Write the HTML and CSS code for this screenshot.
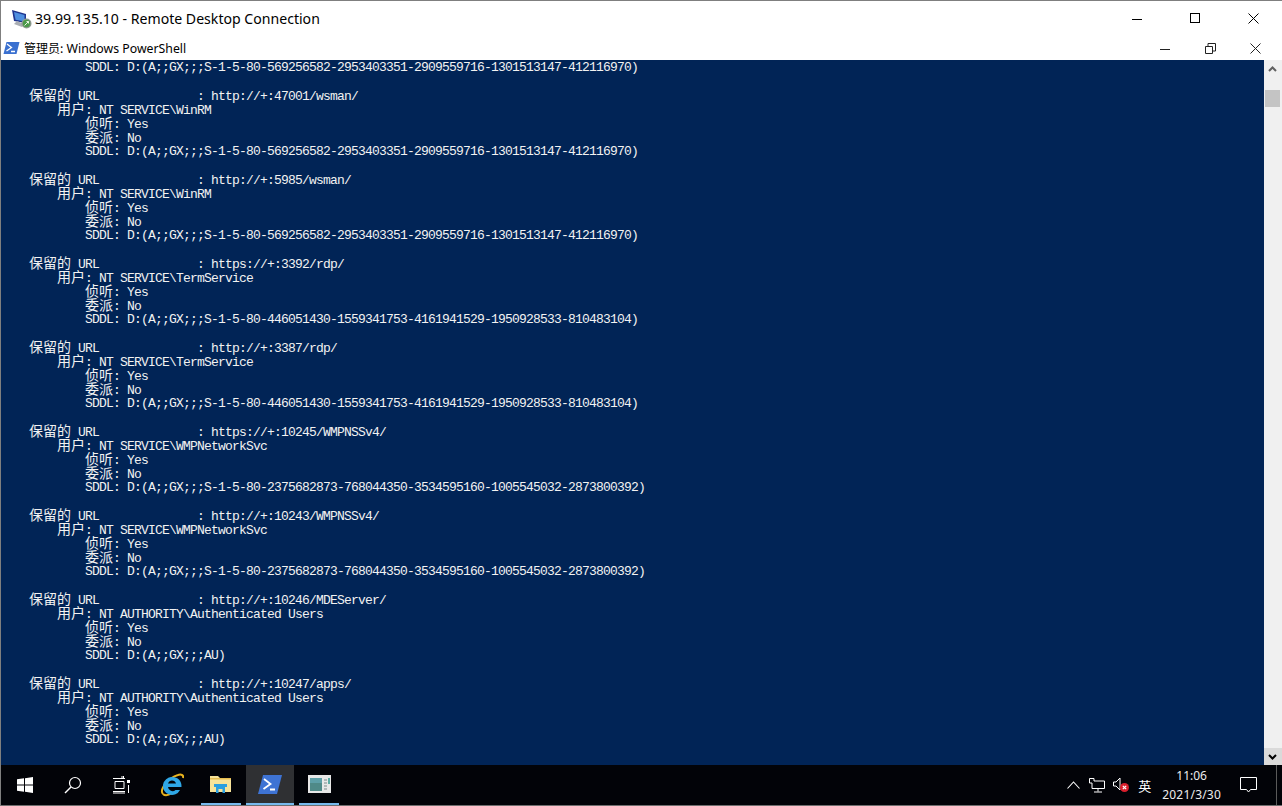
FILE: index.html
```html
<!DOCTYPE html>
<html lang="zh">
<head>
<meta charset="utf-8">
<title>Remote Desktop Connection</title>
<link rel="stylesheet" href="styles.css">
</head>
<body>
<div class="rdp">
  <header class="rdp-bar">
    <svg class="rdp-icon" width="22" height="22" viewBox="0 0 22 22">
      <path d="M1 3 L15 7 V16 L3 14 Z" fill="#20358f"/>
      <path d="M3 5 L13.500 8 V14.500 L4.500 12.800 Z" fill="#4f8fe0"/>
      <path d="M6 14 L13 17 L11 20 L3 17 Z" fill="#a9adb3"/>
      <circle cx="15.500" cy="16.500" r="5" fill="#8f9a92"/>
      <circle cx="15.500" cy="16.500" r="3.700" fill="#4c9a4a"/>
      <path d="M13.500 18.500 L17.500 14.500 M15.500 14.500 H17.500 V16.500" stroke="#e8f5e4" stroke-width="1" fill="none"/>
    </svg>
    <span class="rdp-title">39.99.135.10 - Remote Desktop Connection</span>
    <div class="caption caption-outer">
      <svg width="11" height="11" viewBox="0 0 11 11"><path d="M0 6.500 H10" stroke="#000"/></svg>
      <svg width="11" height="11" viewBox="0 0 11 11"><rect x="0.500" y="0.500" width="9" height="9" fill="none" stroke="#000"/></svg>
      <svg width="11" height="11" viewBox="0 0 11 11"><path d="M0.500 0.500 L10.500 10.500 M10.500 0.500 L0.500 10.500" stroke="#000"/></svg>
    </div>
  </header>
  <header class="ps-bar">
    <svg class="ps-icon" width="17" height="14" viewBox="0 0 17 14">
      <path d="M3.500 1 H16.500 L13.500 13 H0.500 Z" fill="#3a70d0"/>
      <path d="M4 3 L8.500 6.500 L3.500 10 M8 10.500 H12" stroke="#fff" stroke-width="1.300" fill="none"/>
    </svg>
    <span class="ps-title"><span class="ps-cjk">管理员:</span> Windows PowerShell</span>
    <div class="caption caption-inner">
      <svg width="11" height="11" viewBox="0 0 11 11"><path d="M0 6.500 H10" stroke="#222"/></svg>
      <svg width="11" height="11" viewBox="0 0 11 11"><path d="M0.500 3.500 H7.500 V10.500 H0.500 Z M3 3 V0.500 H10.500 V8 H8" fill="none" stroke="#222"/></svg>
      <svg width="11" height="11" viewBox="0 0 11 11"><path d="M0.500 0.500 L10.500 10.500 M10.500 0.500 L0.500 10.500" stroke="#222"/></svg>
    </div>
  </header>
  <main class="ps-body">
    <pre class="console"><div>            SDDL: D:(A;;GX;;;S-1-5-80-569256582-2953403351-2909559716-1301513147-412116970)</div><div> </div><div>    <b>保留的</b> URL              : http://+:47001/wsman/</div><div>        <b>用户</b>: NT SERVICE\WinRM</div><div>            <b>侦听</b>: Yes</div><div>            <b>委派</b>: No</div><div>            SDDL: D:(A;;GX;;;S-1-5-80-569256582-2953403351-2909559716-1301513147-412116970)</div><div> </div><div>    <b>保留的</b> URL              : http://+:5985/wsman/</div><div>        <b>用户</b>: NT SERVICE\WinRM</div><div>            <b>侦听</b>: Yes</div><div>            <b>委派</b>: No</div><div>            SDDL: D:(A;;GX;;;S-1-5-80-569256582-2953403351-2909559716-1301513147-412116970)</div><div> </div><div>    <b>保留的</b> URL              : https://+:3392/rdp/</div><div>        <b>用户</b>: NT SERVICE\TermService</div><div>            <b>侦听</b>: Yes</div><div>            <b>委派</b>: No</div><div>            SDDL: D:(A;;GX;;;S-1-5-80-446051430-1559341753-4161941529-1950928533-810483104)</div><div> </div><div>    <b>保留的</b> URL              : http://+:3387/rdp/</div><div>        <b>用户</b>: NT SERVICE\TermService</div><div>            <b>侦听</b>: Yes</div><div>            <b>委派</b>: No</div><div>            SDDL: D:(A;;GX;;;S-1-5-80-446051430-1559341753-4161941529-1950928533-810483104)</div><div> </div><div>    <b>保留的</b> URL              : https://+:10245/WMPNSSv4/</div><div>        <b>用户</b>: NT SERVICE\WMPNetworkSvc</div><div>            <b>侦听</b>: Yes</div><div>            <b>委派</b>: No</div><div>            SDDL: D:(A;;GX;;;S-1-5-80-2375682873-768044350-3534595160-1005545032-2873800392)</div><div> </div><div>    <b>保留的</b> URL              : http://+:10243/WMPNSSv4/</div><div>        <b>用户</b>: NT SERVICE\WMPNetworkSvc</div><div>            <b>侦听</b>: Yes</div><div>            <b>委派</b>: No</div><div>            SDDL: D:(A;;GX;;;S-1-5-80-2375682873-768044350-3534595160-1005545032-2873800392)</div><div> </div><div>    <b>保留的</b> URL              : http://+:10246/MDEServer/</div><div>        <b>用户</b>: NT AUTHORITY\Authenticated Users</div><div>            <b>侦听</b>: Yes</div><div>            <b>委派</b>: No</div><div>            SDDL: D:(A;;GX;;;AU)</div><div> </div><div>    <b>保留的</b> URL              : http://+:10247/apps/</div><div>        <b>用户</b>: NT AUTHORITY\Authenticated Users</div><div>            <b>侦听</b>: Yes</div><div>            <b>委派</b>: No</div><div>            SDDL: D:(A;;GX;;;AU)</div></pre>
    <aside class="scrollbar">
      <svg class="arrow" width="18" height="17" viewBox="0 0 18 17"><path d="M5 11 L8.500 7.500 L12 11" fill="none" stroke="#606060" stroke-width="2"/></svg>
      <div class="track"><div class="thumb"></div></div>
      <svg class="arrow arrow-down" width="18" height="17" viewBox="0 0 18 17"><path d="M5 7 L8.500 10.500 L12 7" fill="none" stroke="#000" stroke-width="2"/></svg>
    </aside>
  </main>
  <footer class="taskbar">
    <div class="tb-btn tb-start">
      <svg width="16" height="16" viewBox="0 0 16 16"><path d="M0 2.300 L7 1.300 V7.500 H0 Z M8 1.200 L16 0 V7.500 H8 Z M0 8.500 H7 V14.700 L0 13.700 Z M8 8.500 H16 V16 L8 14.800 Z" fill="#fff"/></svg>
    </div>
    <div class="tb-btn tb-search">
      <svg width="18" height="18" viewBox="0 0 18 18"><circle cx="11" cy="7" r="5.500" fill="none" stroke="#fff" stroke-width="1.200"/><path d="M7 11 L1 17" stroke="#fff" stroke-width="1.400"/></svg>
    </div>
    <div class="tb-btn tb-view">
      <svg width="17" height="18" viewBox="0 0 17 18"><path d="M0 2.500 H12 M0 15.500 H12 M0 17 H12 M2 5.500 H11 V12.500 H2 Z M9 0 V2 M10.500 0 V2" fill="none" stroke="#fff"/><rect x="14" y="4" width="3" height="3" fill="#fff"/><path d="M15.500 9 V17" stroke="#fff"/></svg>
    </div>
    <div class="tb-btn tb-ie">
      <svg width="24" height="24" viewBox="0 0 24 24">
        <path d="M3 21 C-1 17 8 5 18 2 C21 1 24 2 23 5" fill="none" stroke="#e8b21e" stroke-width="2"/>
        <path d="M3 21 C5 23 9 22 12 20" fill="none" stroke="#e8b21e" stroke-width="2"/>
        <path d="M12 4 A9 9 0 1 0 20 17 H15.500 A4.500 4.500 0 0 1 8 14 H21.500 C22 8 18 4 12 4 Z M8 10.500 A4.200 4.200 0 0 1 16 10.500 Z" fill="#2fa7e6" fill-rule="evenodd"/>
      </svg>
    </div>
    <div class="tb-btn tb-app tb-files">
      <svg width="22" height="18" viewBox="0 0 22 18">
        <path d="M0 1 H8 L10 3 H21 V17 H0 Z" fill="#f7e39a"/>
        <path d="M0 3 H21 V4.500 H0 Z" fill="#e6bd50"/>
        <path d="M6 18 V11 H15 V18 H12.500 V14 H8.500 V18 Z M4 9 H17 V12 H4 Z" fill="#2b9fe0"/>
      </svg>
    </div>
    <div class="tb-btn tb-app tb-active">
      <svg width="24" height="19" viewBox="0 0 24 19">
        <path d="M5 0 H24 L19 19 H0 Z" fill="#3e73d4"/>
        <path d="M6 4 L12.500 9 L5.500 14 M12 14.500 H17" stroke="#fff" stroke-width="1.800" fill="none"/>
      </svg>
    </div>
    <div class="tb-btn tb-app tb-rdp">
      <svg width="23" height="18" viewBox="0 0 23 18">
        <rect x="0" y="0" width="23" height="18" fill="#e8e8e8"/>
        <rect x="2" y="3" width="12" height="13" fill="#4f8a88"/>
        <rect x="2" y="3" width="12" height="5" fill="#5ea0a8"/>
        <path d="M16 5 H19 M16 8 H19 M16 11 H19 M16 14 H19" stroke="#7a8a8a"/>
        <path d="M21 3 V9" stroke="#2f9a90" stroke-width="1.500"/>
      </svg>
    </div>
    <div class="tray">
      <svg class="tray-chev" width="13" height="8" viewBox="0 0 13 8"><path d="M0.500 7.500 L6.500 1 L12.500 7.500" fill="none" stroke="#fff" stroke-width="1.100"/></svg>
      <svg class="tray-net" width="16" height="15" viewBox="0 0 16 15"><path d="M0.500 0.500 H5 V3 H15.500 V10.500 H3 V5 H0.500 Z M9 10.500 V13.500 M5 14 H13" fill="none" stroke="#fff"/></svg>
      <svg class="tray-vol" width="17" height="16" viewBox="0 0 17 16">
        <path d="M0.500 5 H3 L7 1 V13 L3 9 H0.500 Z" fill="none" stroke="#fff"/>
        <circle cx="11.500" cy="10.500" r="4.500" fill="#d81e2c"/>
        <path d="M9.800 8.800 L13.200 12.200 M13.200 8.800 L9.800 12.200" stroke="#fff" stroke-width="1.200"/>
      </svg>
      <span class="tray-ime">英</span>
      <div class="clock"><span>11:06</span><span class="clock-date">2021/3/30</span></div>
      <svg class="tray-note" width="17" height="16" viewBox="0 0 17 16"><path d="M0.500 0.500 H16.500 V12.500 H10.500 L8.500 15 L6.500 12.500 H0.500 Z" fill="none" stroke="#fff"/></svg>
    </div>
  </footer>
</div>
</body>
</html>
```

FILE: styles.css
```css
* { box-sizing: border-box; }
html, body { margin: 0; padding: 0; height: 100%; overflow: hidden; }
body { background: #fff; font-family: "Open Sans", "Noto Sans CJK SC", sans-serif; }

.rdp {
  width: 1282px;
  height: 806px;
  display: flex;
  flex-direction: column;
  border-top: 1px solid #7f7f7f;
  border-left: 1px solid #7f7f7f;
  border-bottom: 1px solid #6e6e6e;
}

.rdp-bar {
  height: 32px;
  flex: none;
  display: flex;
  align-items: center;
  background: #fff;
  padding-left: 10px;
}
.rdp-icon { flex: none; margin-top: 1px; }
.rdp-title { margin-left: 2px; margin-top: 2px; font-family: "Noto Sans", sans-serif; font-size: 14.1px; color: #000; white-space: nowrap; }

.caption { margin-left: auto; display: flex; align-items: center; }
.caption-outer { gap: 47px; padding-right: 23px; margin-top: 2px; }
.caption-inner { gap: 34px; padding-right: 21px; }

.ps-bar {
  height: 27px;
  flex: none;
  display: flex;
  align-items: center;
  background: #fff;
  padding-left: 2px;
  padding-top: 3px;
}
.ps-icon { flex: none; }
.ps-title { margin-left: 4px; font-family: "Noto Sans", "Noto Sans CJK SC", sans-serif; font-size: 12.3px; color: #000; white-space: nowrap; }
.ps-cjk { font-family: "Noto Sans CJK SC", sans-serif; font-size: 12px; }

.ps-body { flex: 1; min-height: 0; display: flex; background: #012456; }
.console {
  flex: 1;
  margin: 0;
  padding-top: 1px;
  overflow: hidden;
  color: #f2f2f2;
  font-family: "Liberation Mono", "Noto Sans CJK SC", monospace;
  font-size: 13px;
  letter-spacing: -0.801px;
  line-height: 14px;
  white-space: pre;
}
.console div { height: 14px; }
.console div:has(b) { padding-top: 1px; }
.console b {
  font-family: "Noto Sans CJK SC", sans-serif;
  font-weight: 400;
  font-size: 14px;
  letter-spacing: 0;
  line-height: 0;
}

.scrollbar { flex: none; width: 18px; background: #f0f0f0; display: flex; flex-direction: column; }
.arrow { flex: none; display: block; }
.arrow-down { background: #dadada; }
.track { flex: 1; padding: 13px 1px 0; }
.thumb { height: 17px; width: 15px; background: #c4c4c4; }

.taskbar {
  height: 40px;
  flex: none;
  display: flex;
  background: #020308;
  color: #fff;
}
.tb-btn { flex: none; width: 48px; display: flex; align-items: center; justify-content: center; }
.tb-ie { width: 54px; }
.tb-app { border-bottom: 2px solid #76b9ed; }
.tb-files { width: 40px; margin: 0 5px 0 2px; }
.tb-active { width: 48px; background: #2f3033; }
.tb-rdp { width: 40px; margin-left: 5px; }

.tray { margin-left: auto; margin-right: 5px; display: flex; align-items: center; height: 100%; padding-right: 19px; border-right: 1px solid #5a5a5a; }
.tray-chev { margin-right: 9px; }
.tray-net { margin-right: 8px; }
.tray-vol { margin-right: 8px; }
.tray-ime { font-family: "Noto Sans CJK SC", sans-serif; font-size: 13px; margin-right: 11px; }
.clock { display: flex; flex-direction: column; align-items: center; font-family: "Noto Sans", sans-serif; font-size: 12px; line-height: 19px; color: #ececec; margin-right: 19px; }
.clock-date { letter-spacing: 0.2px; }
```
